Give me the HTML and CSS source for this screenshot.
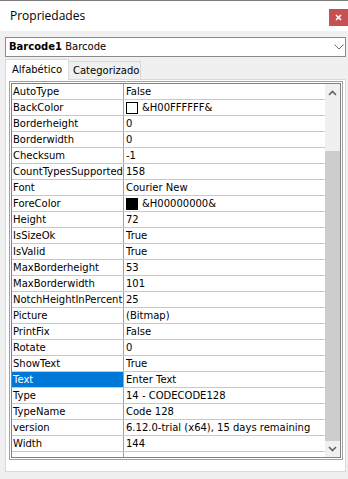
FILE: index.html
```html
<!DOCTYPE html>
<html>
<head>
<meta charset="utf-8">
<link rel="stylesheet" href="styles.css">
</head>
<body>
<div class="window">
  <div class="titlebar">
    <span class="title">Propriedades</span>
    <div class="close"><svg width="7" height="7" viewBox="0 0 7 7"><path d="M1 1L6 6M6 1L1 6" stroke="#fff" stroke-width="1.6"/></svg></div>
  </div>
  <div class="combo">
    <span class="combo-text"><b>Barcode1</b> Barcode</span>
    <svg class="combo-arrow" width="10" height="6" viewBox="0 0 10 6"><path d="M0.5 0.5L5 5L9.5 0.5" fill="none" stroke="#707070" stroke-width="1"/></svg>
  </div>
  <div class="tabs">
    <div class="tab active">Alfabético</div>
    <div class="tab">Categorizado</div>
  </div>
  <div class="page">
    <div class="grid">
      <div class="grid-inner">
        <div class="rows">
          <div class="row"><div class="name">AutoType</div><div class="val">False</div></div>
          <div class="row"><div class="name">BackColor</div><div class="val"><span class="swatch white"></span>&amp;H00FFFFFF&amp;</div></div>
          <div class="row"><div class="name">Borderheight</div><div class="val">0</div></div>
          <div class="row"><div class="name">Borderwidth</div><div class="val">0</div></div>
          <div class="row"><div class="name">Checksum</div><div class="val">-1</div></div>
          <div class="row"><div class="name">CountTypesSupported</div><div class="val">158</div></div>
          <div class="row"><div class="name">Font</div><div class="val">Courier New</div></div>
          <div class="row"><div class="name">ForeColor</div><div class="val"><span class="swatch black"></span>&amp;H00000000&amp;</div></div>
          <div class="row"><div class="name">Height</div><div class="val">72</div></div>
          <div class="row"><div class="name">IsSizeOk</div><div class="val">True</div></div>
          <div class="row"><div class="name">IsValid</div><div class="val">True</div></div>
          <div class="row"><div class="name">MaxBorderheight</div><div class="val">53</div></div>
          <div class="row"><div class="name">MaxBorderwidth</div><div class="val">101</div></div>
          <div class="row"><div class="name">NotchHeightInPercent</div><div class="val">25</div></div>
          <div class="row"><div class="name">Picture</div><div class="val">(Bitmap)</div></div>
          <div class="row"><div class="name">PrintFix</div><div class="val">False</div></div>
          <div class="row"><div class="name">Rotate</div><div class="val">0</div></div>
          <div class="row"><div class="name">ShowText</div><div class="val">True</div></div>
          <div class="row selected"><div class="name">Text</div><div class="val">Enter Text</div></div>
          <div class="row"><div class="name">Type</div><div class="val">14 - CODECODE128</div></div>
          <div class="row"><div class="name">TypeName</div><div class="val">Code 128</div></div>
          <div class="row"><div class="name">version</div><div class="val">6.12.0-trial (x64), 15 days remaining</div></div>
          <div class="row"><div class="name">Width</div><div class="val">144</div></div>
          <div class="filler"><div class="filler-name"></div></div>
        </div>
        <div class="scrollbar">
          <div class="sb-btn up"><svg width="9" height="6" viewBox="0 0 9 6"><path d="M1 5L4.5 1.5L8 5" fill="none" stroke="#606060" stroke-width="1.6"/></svg></div>
          <div class="sb-track">
            <div class="sb-space"></div>
            <div class="sb-thumb"></div>
          </div>
          <div class="sb-btn down"><svg width="9" height="6" viewBox="0 0 9 6"><path d="M1 1L4.5 4.5L8 1" fill="none" stroke="#606060" stroke-width="1.6"/></svg></div>
        </div>
      </div>
    </div>
  </div>
</div>
</body>
</html>
```
FILE: styles.css
```css
html, body {
  margin: 0;
  padding: 0;
}
body {
  width: 348px;
  height: 479px;
  background: #f0f0f0;
  font-family: "DejaVu Sans", sans-serif;
  font-size: 10px;
  color: #000;
  overflow: hidden;
}
.window {
  display: flex;
  flex-direction: column;
  height: 479px;
}
.titlebar {
  height: 30px;
  border-top: 1px solid #7d7d7d;
  background: #fff;
  display: flex;
  justify-content: space-between;
  align-items: flex-start;
}
.title {
  font-family: "Open Sans", sans-serif;
  font-size: 12px;
  line-height: 16px;
  margin: 7px 0 0 10px;
  color: #000;
}
.close {
  margin-top: 8px;
  width: 19px;
  height: 17px;
  background: #c75050;
  display: flex;
  align-items: center;
  justify-content: center;
}
.close svg { display: block; }
.combo {
  margin: 6px 2px 0 5px;
  height: 18px;
  border: 1px solid #8a8a8a;
  background: #fff;
  display: flex;
  align-items: center;
  justify-content: space-between;
}
.combo-text {
  padding-left: 3px;
  line-height: 18px;
}
.combo-text b { font-weight: bold; }
.combo-arrow {
  margin-right: 1px;
  display: block;
}
.tabs {
  margin: 2px 0 0 5px;
  height: 20px;
  display: flex;
  align-items: flex-end;
}
.tab {
  box-sizing: border-box;
  border: 1px solid #d9d9d9;
  border-bottom: none;
  line-height: 16px;
}
.tab.active {
  height: 21px;
  width: 64px;
  margin-bottom: -1px;
  padding: 2px 0 0 6px;
  background: #fff;
  position: relative;
  z-index: 1;
}
.tab:not(.active) {
  height: 18px;
  width: 72px;
  border-left: none;
  padding: 1px 0 0 4px;
  background: #f0f0f0;
}
.page {
  margin: 0 2px 0 5px;
  height: 386px;
  border: 1px solid #d9d9d9;
  background: #fff;
  padding: 1px 2px 4px 3px;
  box-sizing: content-box;
}
.grid {
  height: 379px;
  border: 1px solid #a0a0a0;
  padding: 1px;
  box-sizing: border-box;
  background: #fff;
}
.grid-inner {
  height: 100%;
  box-sizing: border-box;
  border: 1px solid #828282;
  display: flex;
}
.rows {
  flex: 1;
  display: flex;
  flex-direction: column;
}
.row {
  display: flex;
  height: 15px;
  border-bottom: 1px solid #c8c8c8;
  line-height: 15px;
  white-space: nowrap;
}
.name {
  width: 110px;
  padding-left: 1px;
  border-right: 1px solid #a0a0a0;
  flex: none;
  overflow: hidden;
}
.val {
  padding-left: 2px;
  display: flex;
  align-items: center;
}
.row.selected .name {
  background: #0078d7;
  color: #fff;
}
.swatch {
  width: 10px;
  height: 10px;
  border: 1px solid #000;
  margin-right: 4px;
  flex: none;
}
.swatch.white { background: #fff; }
.swatch.black { background: #000; }
.filler {
  flex: 1;
  display: flex;
}
.filler-name {
  width: 111px;
  border-right: 1px solid #a0a0a0;
}
.scrollbar {
  width: 15px;
  display: flex;
  flex-direction: column;
  background: #f0f0f0;
}
.sb-btn {
  display: flex;
  align-items: center;
  justify-content: center;
}
.sb-btn.up { height: 17px; }
.sb-btn.down { height: 16px; }
.sb-btn svg { display: block; }
.sb-track {
  flex: 1;
  display: flex;
  flex-direction: column;
}
.sb-space { height: 50px; }
.sb-thumb {
  flex: 1;
  background: #cdcdcd;
}
```
